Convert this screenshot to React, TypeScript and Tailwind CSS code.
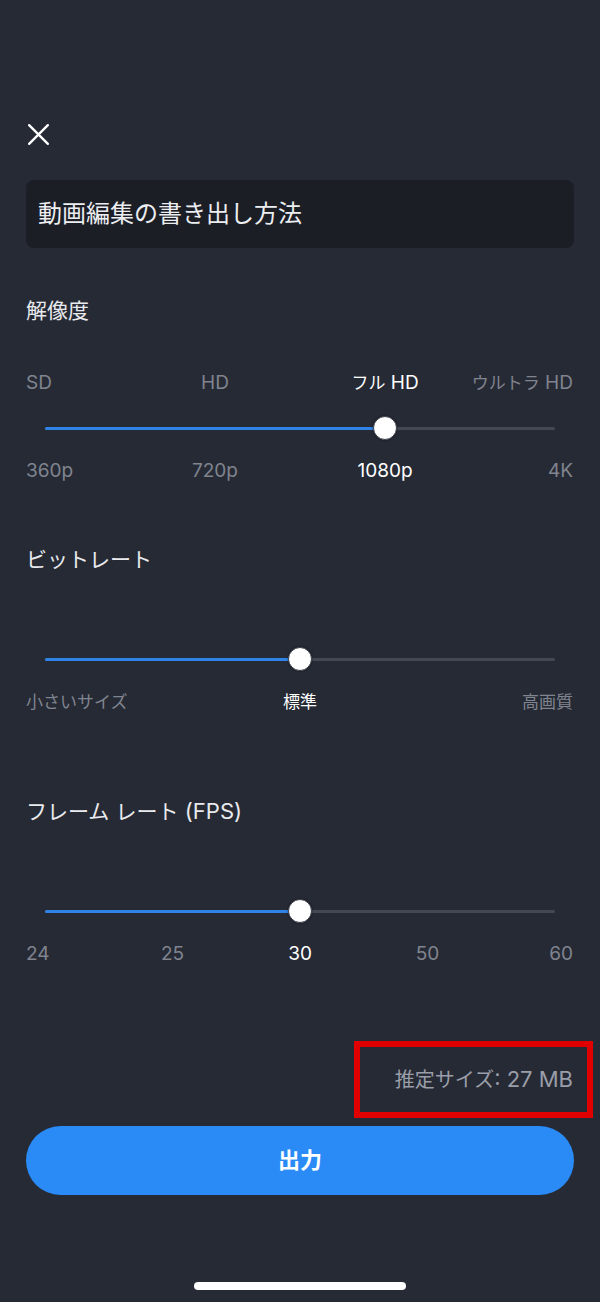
import React from "react";

// Latin runs are rendered slightly larger so they match the iOS system font widths
const Mixed: React.FC<{ text: string; latin?: string }> = ({ text, latin = "text-[1.12em]" }) => {
  const parts = text.split(/([\x20-\x7e]+)/).filter((p) => p.length > 0);
  return (
    <>
      {parts.map((p, i) =>
        /^[\x20-\x7e]+$/.test(p) ? (
          <span key={i} className={latin}>
            {p}
          </span>
        ) : (
          <span key={i}>{p}</span>
        )
      )}
    </>
  );
};

const TickRow: React.FC<{ labels: string[]; active: number }> = ({ labels, active }) => {
  const last = labels.length - 1;
  return (
    <div className="mx-[19px] flex h-6 items-center justify-between">
      {labels.map((label, i) => (
        <div
          key={i}
          className={
            "flex w-0 " +
            (i === 0 ? "justify-start" : i === last ? "justify-end" : "justify-center")
          }
        >
          <span
            className={
              "whitespace-nowrap text-[17px] leading-6 " +
              (i === 0 ? "-ml-[19px] " : i === last ? "-mr-[18px] " : "") +
              (i === active ? "text-white" : "text-[#80848f]")
            }
          >
            <Mixed text={label} />
          </span>
        </div>
      ))}
    </div>
  );
};

const Slider: React.FC<{ count: number; active: number }> = ({ count, active }) => {
  const pct = (active / (count - 1)) * 100;
  return (
    <div className="relative mx-[19px] flex h-6 items-center">
      <div className="flex h-[3px] w-full rounded-full bg-[#444852]">
        <div className="h-full rounded-full bg-[#2f83e6]" style={{ width: `${pct}%` }} />
      </div>
      {/* thumb */}
      <div
        className="absolute top-0 h-6 w-6 -translate-x-1/2 rounded-full border border-[#3a3e48] bg-white shadow-[0_0_2px_rgba(0,0,0,0.6)]"
        style={{ left: `${pct}%` }}
      />
    </div>
  );
};

const Heading: React.FC<{ text: string; className?: string }> = ({ text, className }) => (
  <div className={"text-[21px] leading-7 text-[#e9eaee] " + (className ?? "")}>
    <Mixed text={text} latin="text-[1.05em]" />
  </div>
);

export default function App() {
  const resTop = ["SD", "HD", "フル HD", "ウルトラ HD"];
  const resBottom = ["360p", "720p", "1080p", "4K"];
  const bitrate = ["小さいサイズ", "標準", "高画質"];
  const fps = ["24", "25", "30", "50", "60"];

  return (
    <div
      className="flex min-h-[1302px] w-full flex-col bg-[#262a35] px-[26px]"
      style={{ fontFamily: 'Inter, "Noto Sans CJK JP", sans-serif' }}
    >
      {/* close */}
      <div className="pt-[122px]">
        <svg width="25" height="25" viewBox="0 0 24 24" className="text-white">
          <path d="M3 3 L21 21 M21 3 L3 21" stroke="currentColor" strokeWidth="2.2" strokeLinecap="round" />
        </svg>
      </div>

      {/* title field */}
      <div className="mt-[33px] flex h-[68px] items-center rounded-lg bg-[#1c1e26] px-3">
        <span className="text-[24px] leading-8 text-[#eceef1]">動画編集の書き出し方法</span>
      </div>

      {/* resolution */}
      <Heading text="解像度" className="mt-[49px]" />
      <div className="mt-[46px]">
        <TickRow labels={resTop} active={2} />
      </div>
      <div className="mt-[21px]">
        <Slider count={resTop.length} active={2} />
      </div>
      <div className="mt-[19px]">
        <TickRow labels={resBottom} active={2} />
      </div>

      {/* bitrate */}
      <Heading text="ビットレート" className="mt-[63px]" />
      <div className="mt-[73px]">
        <Slider count={bitrate.length} active={1} />
      </div>
      <div className="mt-[19px]">
        <TickRow labels={bitrate} active={1} />
      </div>

      {/* fps */}
      <Heading text="フレーム レート (FPS)" className="mt-[83px]" />
      <div className="mt-[73px]">
        <Slider count={fps.length} active={2} />
      </div>
      <div className="mt-[19px]">
        <TickRow labels={fps} active={2} />
      </div>

      {/* estimated size */}
      <div className="mt-[75px] flex justify-end">
        <div className="-mr-[19px] flex h-[77px] w-[239px] items-center justify-end border-[6px] border-[#e10000] pr-[14px]">
          <span className="whitespace-nowrap text-[20px] text-[#9a9ea8]">
            <Mixed text="推定サイズ: 27 MB" latin="text-[1.1em]" />
          </span>
        </div>
      </div>

      {/* export button */}
      <button className="mt-[8px] flex h-[69px] w-full items-center justify-center rounded-full bg-[#2a8bf7]">
        <span className="text-[22px] font-bold text-white">出力</span>
      </button>

      {/* home indicator */}
      <div className="mt-[87px] flex justify-center">
        <div className="h-2 w-[212px] rounded-full bg-white" />
      </div>
    </div>
  );
}
